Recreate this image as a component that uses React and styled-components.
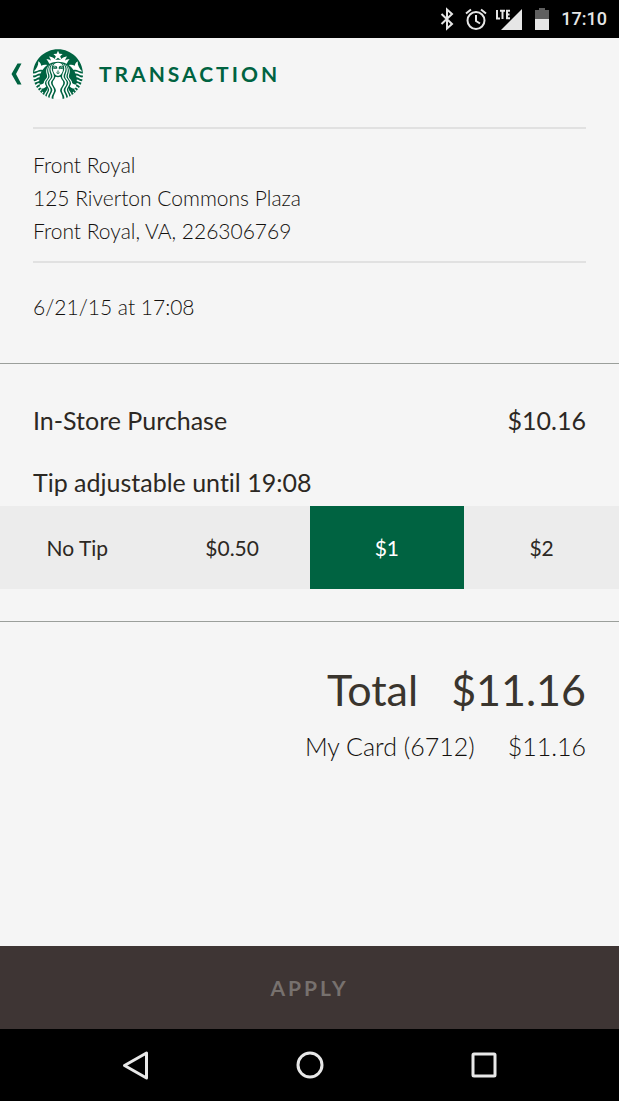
import React, { useState } from "react";
import styled, { createGlobalStyle } from "styled-components";
import { SiStarbucks } from "react-icons/si";

const GlobalStyle = createGlobalStyle`
  *, *::before, *::after { box-sizing: border-box; }
  body {
    margin: 0;
    background: #f5f5f5;
    color: #2c2823;
    font-family: Lato, "Open Sans", sans-serif;
    font-variant-ligatures: none;
  }
  button { border: 0; padding: 0; background: none; font: inherit; color: inherit; }
`;

const Screen = styled.div`
  display: flex;
  flex-direction: column;
  min-height: 100vh;
`;

const StatusBar = styled.div`
  display: flex;
  align-items: center;
  justify-content: flex-end;
  height: 38px;
  padding-right: 12px;
  background: #000;
  color: #e6e6e6;
  font: 500 18px/38px Roboto, sans-serif;
`;

const StatusIcons = styled.svg`
  display: block;
  width: 114px;
  height: 28px;
  margin-right: 8px;
`;

const Header = styled.header`
  display: flex;
  align-items: center;
  height: 72px;
  padding-left: 8px;
  color: #006341;
`;

const BackButton = styled.button`
  display: flex;
  align-items: center;
  justify-content: flex-start;
  width: 25px;
  height: 48px;
`;

const Logo = styled.span`
  display: flex;
  width: 50px;
  height: 50px;
  border-radius: 50%;
  background: #fff;
`;

const Title = styled.h1`
  margin: 0 0 0 16px;
  font-size: 21px;
  line-height: 24px;
  font-weight: 700;
  letter-spacing: 3px;
`;

const Main = styled.main`
  flex: 1;
`;

const Place = styled.section`
  padding: 17px 33px 0;
`;

const Address = styled.address`
  padding: 19px 0 14px;
  border: solid #e1e1e1;
  border-width: 2px 0;
  font-size: 21px;
  line-height: 33px;
  font-style: normal;
  font-weight: 300;
  color: #14110e;
`;

const When = styled.time`
  display: block;
  padding: 27px 0 40px;
  font-size: 21px;
  line-height: 33px;
  font-weight: 300;
  color: #14110e;
`;

const Purchase = styled.section`
  padding: 40px 0 32px;
  border: solid #9b9f9b;
  border-width: 1px 0;
`;

const PurchaseRow = styled.div`
  display: flex;
  justify-content: space-between;
  padding: 0 33px;
  font-size: 25px;
  line-height: 33px;
`;

const Tips = styled.fieldset`
  display: grid;
  grid-template-columns: repeat(4, 1fr);
  min-width: 0;
  margin: 0;
  padding: 0;
  border: 0;
  background: #ececec;
`;

const TipLegend = styled.legend`
  width: 100%;
  padding: 29px 33px 7px;
  background: #f5f5f5;
  font-size: 25px;
  line-height: 33px;
`;

const TipRadio = styled.input`
  appearance: none;
  position: absolute;
  inset: 0;
  width: 100%;
  height: 100%;
  margin: 0;
`;

const TipOption = styled.label`
  position: relative;
  display: flex;
  align-items: center;
  justify-content: center;
  height: 83px;
  font-size: 21px;
  line-height: 24px;
  background: ${(p) => (p.$selected ? "#006341" : "transparent")};
  color: ${(p) => (p.$selected ? "#fff" : "inherit")};
`;

const Totals = styled.dl`
  margin: 0;
  padding: 38px 33px 24px;
`;

const TotalRow = styled.div`
  display: flex;
  justify-content: flex-end;
  gap: 33px;
  font-size: ${(p) => (p.$large ? "43px" : "25px")};
  line-height: ${(p) => (p.$large ? "60px" : "52px")};
  font-weight: ${(p) => (p.$large ? 400 : 300)};
  color: ${(p) => (p.$large ? "#3a352e" : "#14110e")};

  dt, dd { margin: 0; }
`;

const ApplyButton = styled.button`
  height: 83px;
  background: #3e3534;
  color: #77716e;
  font-size: 21px;
  font-weight: 700;
  letter-spacing: 3px;
`;

const NavBar = styled.nav`
  display: flex;
  justify-content: center;
  height: 72px;
  background: #000;
`;

const NavButton = styled.button`
  display: flex;
  align-items: center;
  justify-content: center;
  width: 28%;
`;

const NAV_SHAPES = {
  Back: <path d="M26.500 4 V29 L4.500 16.500 Z" />,
  Home: <circle cx="16" cy="16" r="12" />,
  Recents: <rect x="6" y="5" width="22" height="22" rx="1" />,
};

const TIPS = ["No Tip", "$0.50", "$1", "$2"];

export default function App() {
  const [tip, setTip] = useState("$1");
  return (
    <Screen>
      <GlobalStyle />
      <StatusBar>
        <StatusIcons viewBox="0 0 114 28" role="img" aria-label="Bluetooth, alarm, LTE signal, battery">
          <g fill="none" stroke="#e6e6e6" strokeWidth="2">
            <path d="M2.500 9 L13 19 L8 23.500 V4.500 L13 9 L2.500 19" />
            <circle cx="37" cy="15.500" r="8.500" />
            <path d="M37 10 V16 L41 18.500" />
            <path d="M27 8.500 L32 4.500 M42 4.500 L47 8.500" />
          </g>
          <path d="M83 4 V25 H62 Z" fill="#e6e6e6" />
          <path
            d="M58 5 V13.500 H61 M61 5.800 H66 M63.500 5.800 V14 M71 5.800 H68 V13.200 H71 M68 9.500 H70.500"
            fill="none"
            stroke="#e6e6e6"
            strokeWidth="2"
          />
          <path d="M96 5 H100 V3 H106 V5 H110 V14 H96 Z" fill="#5f5f5f" />
          <path d="M96 14 H110 V25 H96 Z" fill="#e6e6e6" />
        </StatusIcons>
        17:10
      </StatusBar>
      <Header>
        <BackButton aria-label="Go back">
          <svg width="16" height="24" viewBox="0 0 16 24" fill="currentColor" aria-hidden="true">
            <path d="M9.500 1.500 H13.500 L8 12 L13.500 22.500 H9.500 L3.500 12 Z" />
          </svg>
        </BackButton>
        <Logo><SiStarbucks size={50} role="img" aria-label="Starbucks" /></Logo>
        <Title>TRANSACTION</Title>
      </Header>
      <Main>
        <Place>
          <Address>
            Front Royal<br />
            125 Riverton Commons Plaza<br />
            Front Royal, VA, 226306769
          </Address>
          <When>6/21/15 at 17:08</When>
        </Place>
        <Purchase>
          <PurchaseRow>
            <span>In-Store Purchase</span>
            <span>$10.16</span>
          </PurchaseRow>
          <Tips>
            <TipLegend>Tip adjustable until 19:08</TipLegend>
            {TIPS.map((t) => (
              <TipOption key={t} $selected={t === tip}>
                <TipRadio type="radio" name="tip" checked={t === tip} onChange={() => setTip(t)} />
                {t}
              </TipOption>
            ))}
          </Tips>
        </Purchase>
        <Totals>
          <TotalRow $large><dt>Total</dt><dd>$11.16</dd></TotalRow>
          <TotalRow><dt>My Card (6712)</dt><dd>$11.16</dd></TotalRow>
        </Totals>
      </Main>
      <ApplyButton disabled>APPLY</ApplyButton>
      <NavBar>
        {Object.entries(NAV_SHAPES).map(([name, shape]) => (
          <NavButton key={name} aria-label={name}>
            <svg width="32" height="32" viewBox="0 0 32 32" fill="none" stroke="#e8e8e8" strokeWidth="3" strokeLinejoin="round">
              {shape}
            </svg>
          </NavButton>
        ))}
      </NavBar>
    </Screen>
  );
}
